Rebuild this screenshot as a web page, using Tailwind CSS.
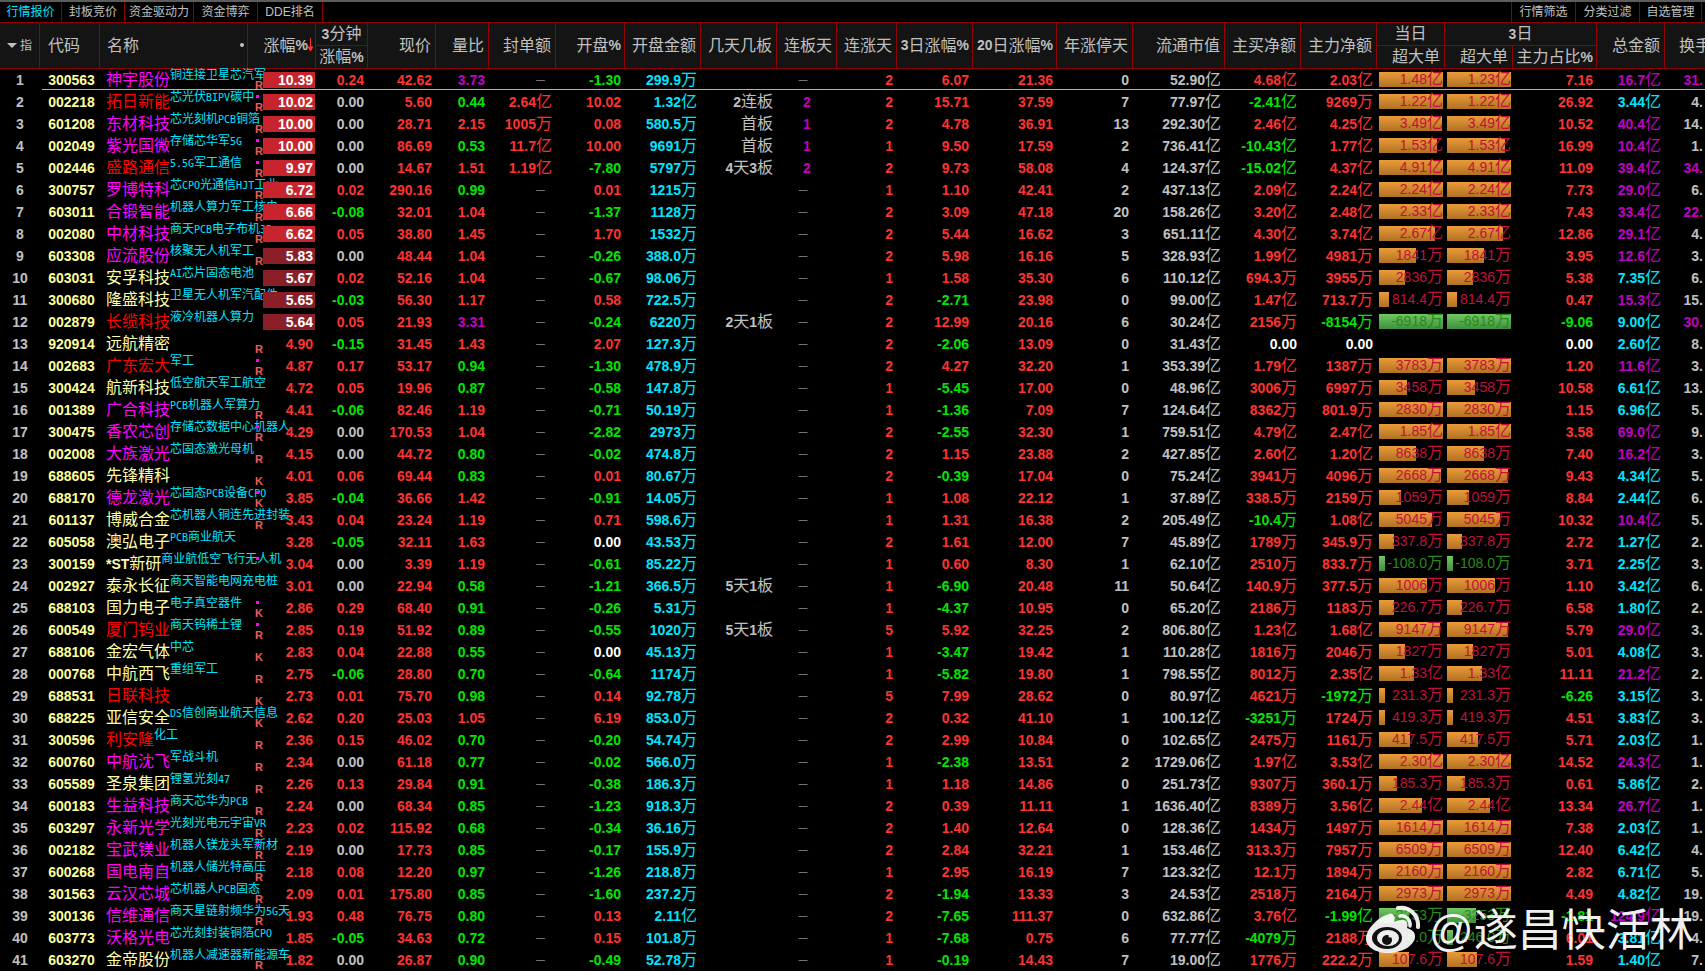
<!DOCTYPE html>
<html lang="zh-CN">
<head>
    <meta charset="UTF-8">
    <title>行情报价</title>
    <script src="https://cdn.jsdelivr.net/npm/@tailwindcss/browser@4"></script>
</head>
<body class="bg-black">
<div id="app" class="relative w-[1705px] h-[971px] overflow-hidden bg-black text-[#c0c0c0] font-['Liberation_Sans','Noto_Sans_CJK_SC',sans-serif]">
    <!-- tabs -->
    <div class="h-[2px] bg-[#5c5c5c]"></div>
    <div class="flex justify-between h-[20px] text-[12px] leading-[20px] border-b border-[#8f0000] box-content">
        <div class="flex">
            <div class="w-[62px] text-center border-r border-[#8f0000] text-[#00e5ff]">行情报价</div>
            <div class="w-[63px] text-center border-r border-[#8f0000]">封板竞价</div>
            <div class="w-[69px] text-center border-r border-[#8f0000]">资金驱动力</div>
            <div class="w-[64px] text-center border-r border-[#8f0000]">资金博弈</div>
            <div class="w-[65px] text-center border-r border-[#8f0000]">DDE排名</div>
        </div>
        <div class="flex pr-[3px]">
            <div class="w-[64px] text-center border-l border-[#8f0000]">行情筛选</div>
            <div class="w-[64px] text-center border-l border-[#8f0000]">分类过滤</div>
            <div class="w-[63px] text-center border-x border-[#8f0000]">自选管理</div>
        </div>
    </div>

    <!-- column header -->
    <div class="grid grid-cols-[40px_60px_148px_68px_52px_68px_53px_67px_69px_76px_76px_60px_60px_76px_84px_76px_92px_76px_76px_68px_68px_84px_68px_40px] grid-rows-[23px_22px] h-[46px] bg-[#141414] border-b border-[#8f0000] text-[16px]">
        <div class="row-span-2 col-start-1 flex items-center justify-center gap-[3px] border-r border-[#8f0000] text-[12px]"><span class="w-0 h-0 border-x-[5px] border-x-transparent border-t-[5px] border-t-[#c0c0c0]"></span>指</div>
        <div class="row-span-2 col-start-2 flex items-center pl-[8px] border-r border-[#8f0000]">代码</div>
        <div class="row-span-2 col-start-3 relative flex items-center pl-[7px] border-r border-[#8f0000]">名称<span class="absolute right-[3px] top-[20px] w-[4px] h-[4px] rounded-full bg-[#c0c0c0]"></span></div>
        <div class="row-span-2 col-start-4 relative flex items-center justify-end pr-[7px] border-r border-[#8f0000]">涨幅<b class="text-[14px]">%</b>
            <svg class="absolute right-[2px] top-[15px] w-[5px] h-[13px]" viewBox="0 0 5 13"><path d="M2.5 0V12M0 9L2.5 13L5 9Z" fill="#ff3232" stroke="#ff3232" stroke-width="1"/></svg>
        </div>
        <div class="col-start-5 text-center leading-[22px] border-r border-b border-[#8f0000]"><b class="text-[14px]">3</b>分钟</div>
        <div class="col-start-5 row-start-2 text-center leading-[22px] border-r border-[#8f0000]">涨幅<b class="text-[14px]">%</b></div>
        <div class="row-span-2 col-start-6 flex items-center justify-end pr-[4px] border-r border-[#8f0000]">现价</div>
        <div class="row-span-2 col-start-7 flex items-center justify-end pr-[4px] border-r border-[#8f0000]">量比</div>
        <div class="row-span-2 col-start-8 flex items-center justify-end pr-[4px] border-r border-[#8f0000]">封单额</div>
        <div class="row-span-2 col-start-9 flex items-center justify-end pr-[3px] border-r border-[#8f0000]">开盘<b class="text-[14px]">%</b></div>
        <div class="row-span-2 col-start-10 flex items-center justify-end pr-[4px] border-r border-[#8f0000]">开盘金额</div>
        <div class="row-span-2 col-start-11 flex items-center justify-end pr-[4px] border-r border-[#8f0000]">几天几板</div>
        <div class="row-span-2 col-start-12 flex items-center justify-end pr-[4px] border-r border-[#8f0000]">连板天</div>
        <div class="row-span-2 col-start-13 flex items-center justify-end pr-[4px] border-r border-[#8f0000]">连涨天</div>
        <div class="row-span-2 col-start-14 flex items-center justify-end pr-[3px] border-r border-[#8f0000]"><b class="text-[14px]">3</b>日涨幅<b class="text-[14px]">%</b></div>
        <div class="row-span-2 col-start-15 flex items-center justify-end pr-[3px] border-r border-[#8f0000]"><b class="text-[14px]">20</b>日涨幅<b class="text-[14px]">%</b></div>
        <div class="row-span-2 col-start-16 flex items-center justify-end pr-[4px] border-r border-[#8f0000]">年涨停天</div>
        <div class="row-span-2 col-start-17 flex items-center justify-end pr-[4px] border-r border-[#8f0000]">流通市值</div>
        <div class="row-span-2 col-start-18 flex items-center justify-end pr-[4px] border-r border-[#8f0000]">主买净额</div>
        <div class="row-span-2 col-start-19 flex items-center justify-end pr-[4px] border-r border-[#8f0000]">主力净额</div>
        <div class="col-start-20 text-center leading-[22px] border-r border-b border-[#8f0000]">当日</div>
        <div class="col-start-21 col-span-2 text-center leading-[22px] border-r border-b border-[#8f0000]"><b class="text-[14px]">3</b>日</div>
        <div class="col-start-20 row-start-2 text-right pr-[4px] leading-[22px] border-r border-[#8f0000]">超大单</div>
        <div class="col-start-21 row-start-2 text-right pr-[4px] leading-[22px] border-r border-[#8f0000]">超大单</div>
        <div class="col-start-22 row-start-2 text-right pr-[3px] leading-[22px] border-r border-[#8f0000]">主力占比<b class="text-[14px]">%</b></div>
        <div class="row-span-2 col-start-23 row-start-1 flex items-center justify-end pr-[4px] border-r border-[#8f0000]">总金额</div>
        <div class="row-span-2 col-start-24 row-start-1 flex items-center pl-[14px] whitespace-nowrap overflow-hidden">换手%</div>
    </div>

    <div id="rows"></div>

    <!-- selected row line -->
    <div class="absolute left-[42px] right-0 top-[89px] h-px bg-[#c8c800]"></div>

    <!-- watermark -->
    <svg class="absolute left-[1365px] top-[905px] w-[57px] h-[48px]" viewBox="0 0 57 48">
        <path d="M24 9C13 12 1 24 1 34c0 8 10 14 22 14 15 0 27-8 27-17 0-5-5-7-8-8 1-3 1-5-1-7-3-2-8-1-12 1 1-3 1-5 0-6-1-2-3-3-5-2z" fill="#fff" fill-opacity="0.92"/>
        <ellipse cx="22" cy="33" rx="15" ry="11" fill="#101010"/>
        <ellipse cx="23" cy="33" rx="11" ry="8" fill="#eee"/>
        <circle cx="22" cy="35" r="5" fill="#101010"/>
        <circle cx="25" cy="31" r="1.5" fill="#eee"/>
        <path d="M33 3c11-2 21 7 20 19" fill="none" stroke="#fff" stroke-opacity="0.92" stroke-width="4" stroke-linecap="round"/>
        <path d="M35 11c6-1 11 4 10 10" fill="none" stroke="#fff" stroke-opacity="0.92" stroke-width="3.5" stroke-linecap="round"/>
    </svg>
    <div class="absolute left-[1429px] top-[900px] text-[44px] leading-[62px] text-white/95 whitespace-nowrap">@遂昌快活林</div>
</div>

<script>
    const M = 'text-[#ff00ff]', D = 'text-[#ff0000]', Y = 'text-[#ffffa8]';
    // idx follows array order
    const data = [
        ['300563','神宇股份',M,'铜连接卫星芯汽军','','R','10.39','0.24','42.62','3.73','—','-1.30','299.9万','','—','2','6.07','21.36','0','52.90亿','4.68亿','2.03亿',64,'1.48亿',64,'1.23亿','7.16','16.7亿','31.'],
        ['002218','拓日新能',D,'芯光伏BIPV碳中','1','R','10.02','0.00','5.60','0.44','2.64亿','10.02','1.32亿','2连板','2','2','15.71','37.59','7','77.97亿','-2.41亿','9269万',64,'1.22亿',64,'1.22亿','26.92','3.44亿','4.'],
        ['601208','东材科技',M,'芯光刻机PCB铜箔','','R','10.00','0.00','28.71','2.15','1005万','0.08','580.5万','首板','1','2','4.78','36.91','13','292.30亿','2.46亿','4.25亿',63,'3.49亿',63,'3.49亿','10.52','40.4亿','14.'],
        ['002049','紫光国微',M,'存储芯华军5G','1','R','10.00','0.00','86.69','0.53','11.7亿','10.00','9691万','首板','1','1','9.50','17.59','2','736.41亿','-10.43亿','1.77亿',58,'1.53亿',58,'1.53亿','16.99','10.4亿','1.'],
        ['002446','盛路通信',D,'5.5G军工通信','1','R','9.97','0.00','14.67','1.51','1.19亿','-7.80','5797万','4天3板','2','2','9.73','58.08','4','124.37亿','-15.02亿','4.37亿',64,'4.91亿',64,'4.91亿','11.09','39.4亿','34.'],
        ['300757','罗博特科',M,'芯CPO光通信HJT工业','','R','6.72','0.02','290.16','0.99','—','0.01','1215万','','—','1','1.10','42.41','2','437.13亿','2.09亿','2.24亿',64,'2.24亿',64,'2.24亿','7.73','29.0亿','6.'],
        ['603011','合锻智能',M,'机器人算力军工核电','','R','6.66','-0.08','32.01','1.04','—','-1.37','1128万','','—','2','3.09','47.18','20','158.26亿','3.20亿','2.48亿',64,'2.33亿',64,'2.33亿','7.43','33.4亿','22.'],
        ['002080','中材科技',M,'商天PCB电子布机3D','','R','6.62','0.05','38.80','1.45','—','1.70','1532万','','—','2','5.44','16.62','3','651.11亿','4.30亿','3.74亿',56,'2.67亿',56,'2.67亿','12.86','29.1亿','4.'],
        ['603308','应流股份',M,'核聚无人机军工','','R','5.83','0.00','48.44','1.04','—','-0.26','388.0万','','—','2','5.98','16.16','5','328.93亿','1.99亿','4981万',37,'1841万',37,'1841万','3.95','12.6亿','3.'],
        ['603031','安孚科技',Y,'AI芯片固态电池','','','5.67','0.02','52.16','1.04','—','-0.67','98.06万','','—','1','1.58','35.30','6','110.12亿','694.3万','3955万',26,'2836万',26,'2836万','5.38','7.35亿','6.'],
        ['300680','隆盛科技',Y,'卫星无人机军汽配件','','','5.65','-0.03','56.30','1.17','—','0.58','722.5万','','—','2','-2.71','23.98','0','99.00亿','1.47亿','713.7万',10,'814.4万',10,'814.4万','0.47','15.3亿','15.'],
        ['002879','长缆科技',D,'液冷机器人算力','','','5.64','0.05','21.93','3.31','—','-0.24','6220万','2天1板','—','2','12.99','20.16','6','30.24亿','2156万','-8154万',64,'-6918万',64,'-6918万','-9.06','9.00亿','30.'],
        ['920914','远航精密',Y,'','','R','4.90','-0.15','31.45','1.43','—','2.07','127.3万','','—','2','-2.06','13.09','0','31.43亿','0.00','0.00',0,'',0,'','0.00','2.60亿','8.'],
        ['002683','广东宏大',D,'军工','1','R','4.87','0.17','53.17','0.94','—','-1.30','478.9万','','—','2','4.27','32.20','1','353.39亿','1.79亿','1387万',64,'3783万',64,'3783万','1.20','11.6亿','3.'],
        ['300424','航新科技',Y,'低空航天军工航空','','','4.72','0.05','19.96','0.87','—','-0.58','147.8万','','—','1','-5.45','17.00','0','48.96亿','3006万','6997万',28,'3458万',28,'3458万','10.58','6.61亿','13.'],
        ['001389','广合科技',M,'PCB机器人军算力','','R','4.41','-0.06','82.46','1.19','—','-0.71','50.19万','','—','1','-1.36','7.09','7','124.64亿','8362万','801.9万',64,'2830万',64,'2830万','1.15','6.96亿','5.'],
        ['300475','香农芯创',M,'存储芯数据中心机器人','1','R','4.29','0.00','170.53','1.04','—','-2.82','2973万','','—','2','-2.55','32.30','1','759.51亿','4.79亿','2.47亿',64,'1.85亿',64,'1.85亿','3.58','69.0亿','9.'],
        ['002008','大族激光',M,'芯固态激光母机','','R','4.15','0.00','44.72','0.80','—','-0.02','474.8万','','—','2','1.15','23.88','2','427.85亿','2.60亿','1.20亿',37,'8638万',37,'8638万','7.40','16.2亿','3.'],
        ['688605','先锋精科',Y,'','','K','4.01','0.06','69.44','0.83','—','0.01','80.67万','','—','2','-0.39','17.04','0','75.24亿','3941万','4096万',62,'2668万',61,'2668万','9.43','4.34亿','5.'],
        ['688170','德龙激光',M,'芯固态PCB设备CPO','1','K','3.85','-0.04','36.66','1.42','—','-0.91','14.05万','','—','1','1.08','22.12','1','37.89亿','338.5万','2159万',22,'1059万',22,'1059万','8.84','2.44亿','6.'],
        ['601137','博威合金',Y,'芯机器人铜连先进封装','','R','3.43','0.04','23.24','1.19','—','0.71','598.6万','','—','1','1.31','16.38','2','205.49亿','-10.4万','1.08亿',53,'5045万',53,'5045万','10.32','10.4亿','5.'],
        ['605058','澳弘电子',Y,'PCB商业航天','','','3.28','-0.05','32.11','1.63','—','0.00','43.53万','','—','2','1.61','12.00','7','45.89亿','1789万','345.9万',15,'337.8万',15,'337.8万','2.72','1.27亿','2.'],
        ['300159','*ST新研',Y,'商业航低空飞行无人机','1','','3.04','0.00','3.39','1.19','—','-0.61','85.22万','','—','1','0.60','8.30','1','62.10亿','2510万','833.7万',6,'-108.0万',6,'-108.0万','3.71','2.25亿','3.'],
        ['002927','泰永长征',Y,'商天智能电网充电桩','','','3.01','0.00','22.94','0.58','—','-1.21','366.5万','5天1板','—','1','-6.90','20.48','11','50.64亿','140.9万','377.5万',48,'1006万',48,'1006万','1.10','3.42亿','6.'],
        ['688103','国力电子',Y,'电子真空器件','1','K','2.86','0.29','68.40','0.91','—','-0.26','5.31万','','—','1','-4.37','10.95','0','65.20亿','2186万','1183万',15,'226.7万',15,'226.7万','6.58','1.80亿','2.'],
        ['600549','厦门钨业',D,'商天钨稀土锂','1','R','2.85','0.19','51.92','0.89','—','-0.55','1020万','5天1板','—','5','5.92','32.25','2','806.80亿','1.23亿','1.68亿',61,'9147万',61,'9147万','5.79','29.0亿','3.'],
        ['688106','金宏气体',Y,'中芯','','K','2.83','0.04','22.88','0.55','—','0.00','45.13万','','—','1','-3.47','19.42','1','110.28亿','1816万','2046万',26,'1827万',26,'1827万','5.01','4.08亿','3.'],
        ['000768','中航西飞',Y,'重组军工','','R','2.75','-0.06','28.80','0.70','—','-0.64','1174万','','—','1','-5.82','19.80','1','798.55亿','8012万','2.35亿',35,'1.33亿',35,'1.33亿','11.11','21.2亿','2.'],
        ['688531','日联科技',D,'','','K','2.73','0.01','75.70','0.98','—','0.14','92.78万','','—','5','7.99','28.62','0','80.97亿','4621万','-1972万',6,'231.3万',6,'231.3万','-6.26','3.15亿','3.'],
        ['688225','亚信安全',Y,'DS信创商业航天信息','','K','2.62','0.20','25.03','1.05','—','6.19','853.0万','','—','2','0.32','41.10','1','100.12亿','-3251万','1724万',6,'419.3万',6,'419.3万','4.51','3.83亿','3.'],
        ['300596','利安隆',D,'化工','','R','2.36','0.15','46.02','0.70','—','-0.20','54.74万','','—','2','2.99','10.84','0','102.65亿','2475万','1161万',31,'417.5万',31,'417.5万','5.71','2.03亿','1.'],
        ['600760','中航沈飞',M,'军战斗机','','R','2.34','0.00','61.18','0.77','—','-0.02','566.0万','','—','1','-2.38','13.51','2','1729.06亿','1.97亿','3.53亿',64,'2.30亿',64,'2.30亿','14.52','24.3亿','1.'],
        ['605589','圣泉集团',Y,'锂氢光刻47','','R','2.26','0.13','29.84','0.91','—','-0.38','186.3万','','—','1','1.18','14.86','0','251.73亿','9307万','360.1万',18,'185.3万',18,'185.3万','0.61','5.86亿','2.'],
        ['600183','生益科技',M,'商天芯华为PCB','','R','2.24','0.00','68.34','0.85','—','-1.23','918.3万','','—','2','0.39','11.11','1','1636.40亿','8389万','3.56亿',43,'2.44亿',43,'2.44亿','13.34','26.7亿','1.'],
        ['603297','永新光学',M,'光刻光电元宇宙VR','','R','2.23','0.02','115.92','0.68','—','-0.34','36.16万','','—','2','1.40','12.64','0','128.36亿','1434万','1497万',64,'1614万',64,'1614万','7.38','2.03亿','1.'],
        ['002182','宝武镁业',M,'机器人镁龙头军新材','1','R','2.19','0.00','17.73','0.85','—','-0.17','155.9万','','—','2','2.84','32.21','1','153.46亿','313.3万','7957万',64,'6509万',64,'6509万','12.40','6.42亿','4.'],
        ['600268','国电南自',M,'机器人储光特高压','','R','2.18','0.08','12.20','0.97','—','-1.26','218.8万','','—','1','2.95','16.19','7','123.32亿','12.1万','1894万',64,'2160万',64,'2160万','2.82','6.71亿','5.'],
        ['301563','云汉芯城',M,'芯机器人PCB固态','','R','2.09','0.01','175.80','0.85','—','-1.60','237.2万','','—','2','-1.94','13.33','3','24.53亿','2518万','2164万',64,'2973万',64,'2973万','4.49','4.82亿','19.'],
        ['300136','信维通信',M,'商天星链射频华为5G天','','R','1.93','0.48','76.75','0.80','—','0.13','2.11亿','','—','2','-7.65','111.37','0','632.86亿','3.76亿','-1.99亿',30,'-3253万',29,'-3253万','-1.81','124.9亿','19.'],
        ['603773','沃格光电',M,'芯光刻封装铜箔CPO','','','1.85','-0.05','34.63','0.72','—','0.15','101.8万','','—','1','-7.68','0.75','6','77.77亿','-4079万','2188万',6,'-246.0万',6,'-246.0万','6.01','3.81亿','4.'],
        ['603270','金帝股份',Y,'机器人减速器新能源车','','R','1.82','0.00','26.87','0.90','—','-0.49','52.78万','','—','1','-0.19','14.43','7','19.00亿','1776万','222.2万',30,'107.6万',30,'107.6万','1.59','1.40亿','7.'],
    ];

    const RED = 'text-[#ff3232]', GREEN = 'text-[#00e600]', GRAY = 'text-[#c0c0c0]', WHITE = 'text-white',
          CYAN = 'text-[#00e5ff]', PURPLE = 'text-[#c000c0]';

    // number bold, unit thin like the terminal font
    function num(v, color, pr) {
        const m = v.match(/^(.*?)([亿万]?)$/);
        const unit = m[2] ? `<span class="text-[16px] font-normal">${m[2]}</span>` : '';
        return `<div class="text-right font-bold text-[14px] ${pr} ${color}">${m[1]}${unit}</div>`;
    }
    const sign = v => v.startsWith('-') ? GREEN : parseFloat(v) === 0 ? GRAY : RED;
    const signW = v => v.startsWith('-') ? GREEN : parseFloat(v) === 0 ? WHITE : RED;

    function tagHtml(t) {
        return t.replace(/[A-Za-z0-9.]+/g, s => `<span class="text-[10px] font-['DejaVu_Sans_Mono',monospace]">${s}</span>`);
    }

    function bar(w, v) {
        if (!v) return '<div></div>';
        const neg = v.startsWith('-');
        const m = v.match(/^(.*?)([亿万])$/);
        return `<div class="relative h-[22px]">
            <div class="absolute left-[2px] top-[3px] h-[15px] ${neg ? 'bg-gradient-to-b from-[#72c862] to-[#3e8f3e]' : 'bg-gradient-to-b from-[#ec9c36] to-[#b07026]'}" style="width:${w}px"></div>
            <div class="absolute right-[2px] -top-px text-[14px] ${neg ? 'text-[#2a8a18]' : 'text-[#c4103c]'} whitespace-nowrap">${m[1]}<span class="text-[16px]">${m[2]}</span></div>
        </div>`;
    }

    document.getElementById('rows').innerHTML = data.map((r, i) => {
        const [code, name, nc, tag, dot, mark, chg, m3, price, lb, fd, op, opAmt, jb, lbt, lzt, d3, d20, ny, lt, zm, zl, w1, v1, w2, v2, zb, total, hs] = r;
        const lbc = parseFloat(lb) >= 3 ? PURPLE : parseFloat(lb) >= 1 ? RED : GREEN;
        const strong = i < 8, hasBar = i < 12;
        return `<div class="grid grid-cols-[40px_60px_148px_68px_52px_68px_53px_67px_69px_76px_76px_60px_60px_76px_84px_76px_92px_76px_76px_68px_68px_84px_68px_40px] h-[22px] leading-[22px] items-center whitespace-nowrap">
            <div class="text-center font-bold text-[14px] ${GRAY}">${i + 1}</div>
            <div class="text-center pl-[3px] font-bold text-[14px] text-[#ffff99]">${code}</div>
            <div class="relative h-[22px] flex pl-[6px]">
                <span class="text-[16px] ${nc}">${name.replace(/^\*ST/, '<b class="text-[14px]">*ST</b>')}</span>
                <span class="relative -top-[5px] text-[12px] text-[#00e5ff]">${tagHtml(tag)}</span>
                ${dot ? '<span class="absolute left-[156px] top-[4px] w-[3px] h-[3px] bg-[#ff00ff] z-[1]"></span>' : ''}
                ${mark ? `<span class="absolute left-[155px] top-[10px] text-[11px] leading-[12px] font-bold text-[#f05a5a] z-[1]">${mark}</span>` : ''}
            </div>
            <div class="relative h-[22px] z-[2]">
                ${hasBar ? `<div class="absolute left-[15px] top-[3px] w-[52px] h-[16px] ${strong ? 'bg-[#c8242e]' : 'bg-[#8b1f28]'}"></div>` : ''}
                <div class="absolute right-[3px] top-0 font-bold text-[14px] ${hasBar ? 'text-white' : RED}">${chg}</div>
            </div>
            ${num(m3, sign(m3), 'pr-[4px]')}
            ${num(price, RED, 'pr-[4px]')}
            ${num(lb, lbc, 'pr-[4px]')}
            ${fd === '—' ? `<div class="text-right pr-[11px] text-[9px] ${GRAY}">—</div>` : num(fd, RED, 'pr-[4px]')}
            ${num(op, op === '0.00' ? WHITE : sign(op), 'pr-[4px]')}
            ${num(opAmt, CYAN, 'pr-[4px]')}
            <div class="text-right pr-[4px] text-[16px] ${GRAY}">${jb.replace(/\d/g, '<b class="text-[14px]">$&</b>')}</div>
            ${lbt === '—' ? `<div class="text-center pr-[8px] text-[9px] ${GRAY}">—</div>` : `<div class="text-center text-[14px] font-bold ${PURPLE}">${lbt}</div>`}
            ${num(lzt, RED, 'pr-[4px]')}
            ${num(d3, sign(d3), 'pr-[4px]')}
            ${num(d20, RED, 'pr-[4px]')}
            ${num(ny, GRAY, 'pr-[4px]')}
            ${num(lt, GRAY, 'pr-[4px]')}
            ${num(zm, signW(zm), 'pr-[4px]')}
            ${num(zl, signW(zl), 'pr-[4px]')}
            ${bar(w1, v1)}
            ${bar(w2, v2)}
            ${num(zb, signW(zb), 'pr-[4px]')}
            ${num(total, parseFloat(total) >= 10 ? PURPLE : CYAN, 'pr-[4px]')}
            ${num(hs, parseFloat(hs) >= 20 ? PURPLE : GRAY, 'pr-[2px]')}
        </div>`;
    }).join('');
</script>
</body>
</html>
